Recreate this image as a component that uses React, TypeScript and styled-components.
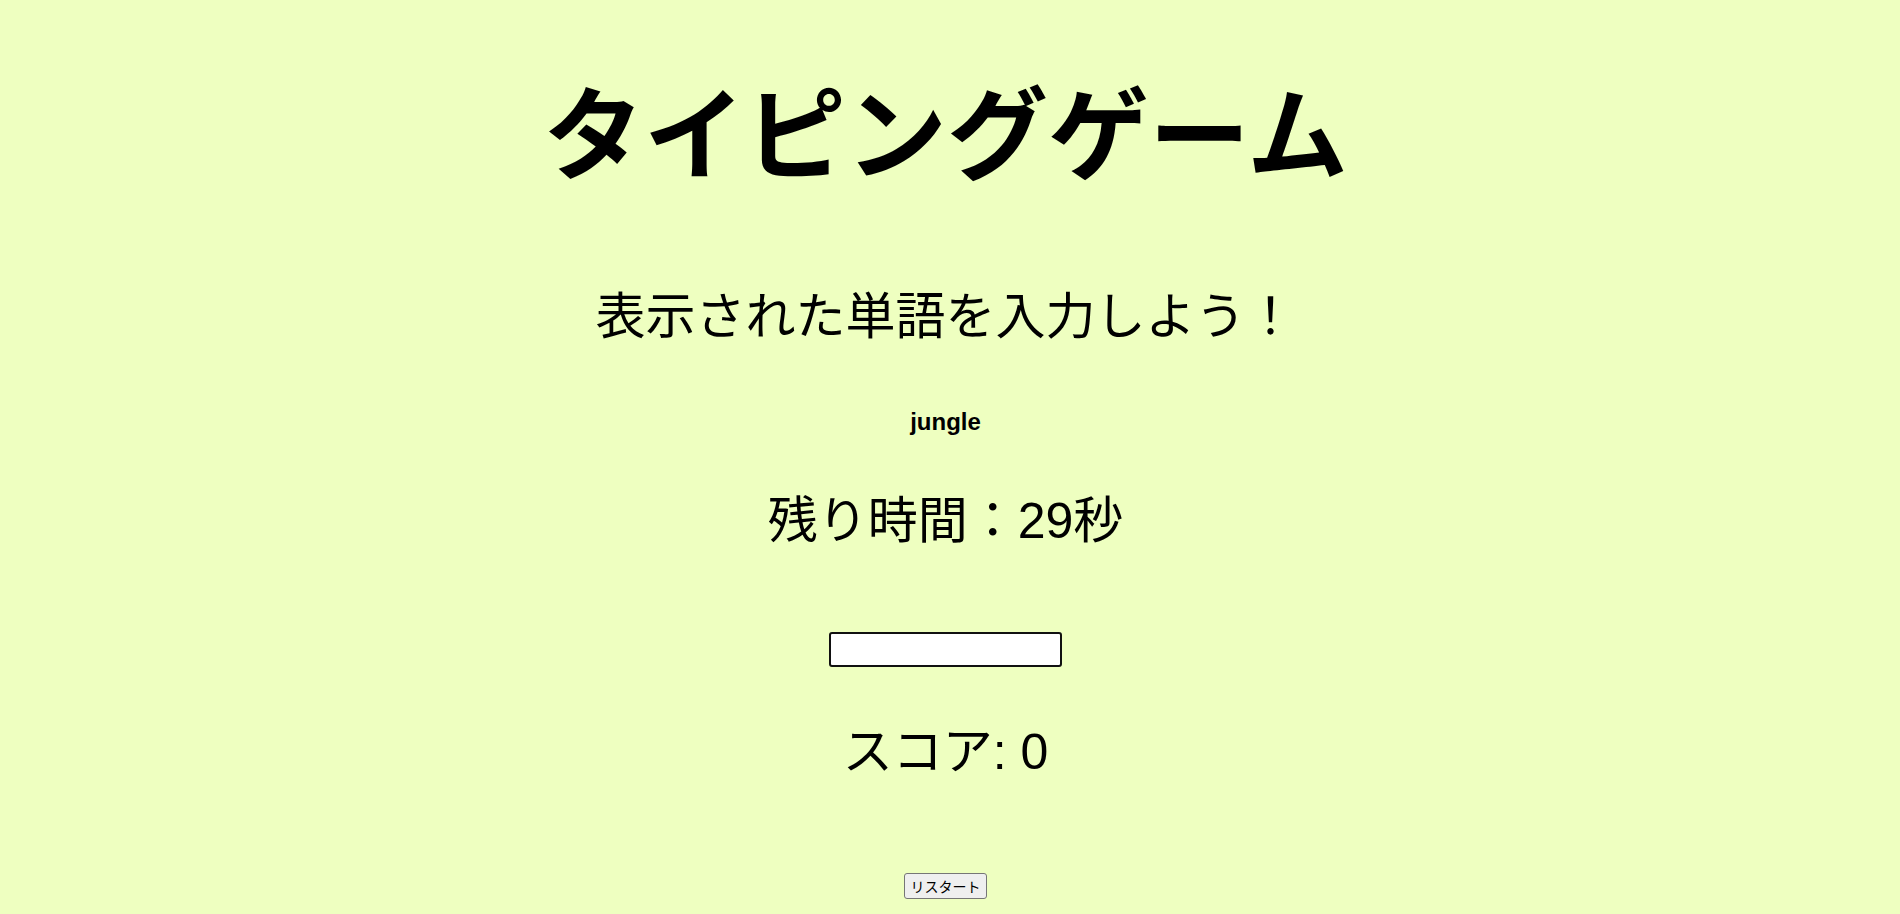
import React, { useState } from "react";
import styled, { createGlobalStyle } from "styled-components";

const Global = createGlobalStyle`
  html, body {
    margin: 0;
    padding: 0;
    background: #eeffc0;
  }
  body {
    font-family: "Liberation Sans", "Noto Sans CJK JP", sans-serif;
    color: #000;
  }
`;

const Page = styled.main`
  display: flex;
  flex-direction: column;
  align-items: center;
  padding-right: 9px;
  text-align: center;
`;

const Title = styled.h1`
  margin: 68px 0 0;
  font-size: 101px;
  line-height: 120px;
  font-weight: 700;
  font-family: "Noto Sans CJK JP", sans-serif;
`;

const Lead = styled.p<{ $top: number }>`
  margin: ${(p) => p.$top}px 0 0;
  font-size: 50px;
  line-height: 60px;
  font-weight: 400;
  font-family: "Liberation Sans", "Noto Sans CJK JP", sans-serif;
`;

const Word = styled.h2`
  margin: 61px 0 0;
  font-size: 24px;
  line-height: 28px;
  font-weight: 700;
  font-family: "Liberation Sans", Arial, sans-serif;
`;

const Field = styled.input`
  box-sizing: border-box;
  margin: 81px 0 0;
  width: 233px;
  height: 35px;
  border: 2px solid #111;
  border-radius: 3px;
  background: #fff;
  font-size: 20px;
  padding: 0 6px;
  outline: none;
`;

const Restart = styled.button`
  box-sizing: border-box;
  margin: 91px 0 0;
  width: 83px;
  height: 26px;
  padding: 0;
  border: 1px solid #767676;
  border-radius: 3px;
  background: #efefef;
  font-size: 14px;
  line-height: 24px;
  white-space: nowrap;
  font-family: "Noto Sans CJK JP", sans-serif;
  color: #000;
  cursor: pointer;
`;

export default function App() {
  const [value, setValue] = useState("");
  return (
    <>
      <Global />
      <Page>
        <Title>タイピングゲーム</Title>
        <Lead $top={99}>表示された単語を入力しよう！</Lead>
        <Word>jungle</Word>
        <Lead $top={55}>残り時間：29秒</Lead>
        <Field value={value} onChange={(e) => setValue(e.target.value)} />
        <Lead $top={55}>スコア: 0</Lead>
        <Restart>リスタート</Restart>
      </Page>
    </>
  );
}
